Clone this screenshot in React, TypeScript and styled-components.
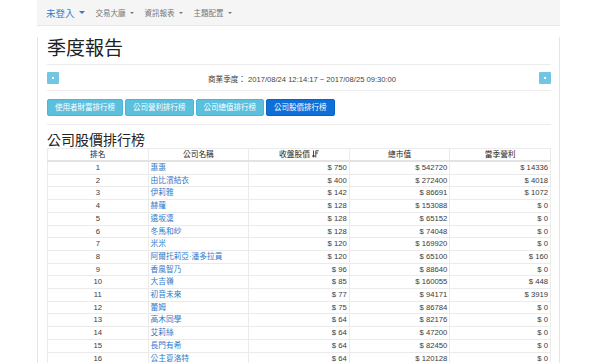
import styled, { createGlobalStyle } from 'styled-components'

const GlobalStyle = createGlobalStyle`
    html, body {
        margin: 0;
        padding: 0;
        overflow: hidden;
        background: #fff;
    }
    body {
        font-family: "Liberation Sans", "Noto Sans CJK TC", sans-serif;
        color: #333;
    }
`

const Page = styled.div`
    width: 523px;
    margin-left: 37px;
`

const Navbar = styled.nav`
    height: 25px;
    background: #f5f5f5;
    border-bottom: 1px solid #e7e7e7;
    display: flex;
    align-items: center;
    padding-left: 9px;
    gap: 11px;
`

const NavItem = styled.span<{ $main?: boolean }>`
    display: flex;
    align-items: center;
    gap: 4px;
    font-size: ${p => (p.$main ? '9.5px' : '7.5px')};
    color: ${p => (p.$main ? '#2f7bd0' : '#777')};
`

const Caret = styled.span<{ $main?: boolean }>`
    width: 0;
    height: 0;
    border-left: ${p => (p.$main ? '3px' : '2px')} solid transparent;
    border-right: ${p => (p.$main ? '3px' : '2px')} solid transparent;
    border-top: ${p => (p.$main ? '3px' : '2px')} solid currentColor;
`

const Panel = styled.main`
    border-left: 1px solid #e5e5e5;
    border-right: 1px solid #e5e5e5;
    padding: 0 8px 40px 9px;
`

const Title = styled.h1`
    margin: 11px 0 0;
    font-size: 19px;
    line-height: 19px;
    font-weight: 400;
    font-family: "Noto Sans CJK TC", sans-serif;
    color: #222;
`

const Rule = styled.hr<{ $top: number }>`
    margin: ${p => p.$top}px 0 0;
    border: 0;
    border-top: 1px solid #ececec;
`

const PeriodRow = styled.div`
    margin-top: 7px;
    height: 12px;
    display: flex;
    align-items: center;
    justify-content: space-between;
`

const PageButton = styled.span`
    width: 12px;
    height: 12px;
    border-radius: 1px;
    background: #72c6e4;
    display: flex;
    align-items: center;
    justify-content: center;

    &::after {
        content: '';
        width: 2px;
        height: 2px;
        background: #fff;
    }
`

const Period = styled.span`
    font-size: 7.6px;
    color: #444;
    padding-left: 6px;
`

const Tabs = styled.div`
    margin-top: 8px;
    display: flex;
    gap: 2px;
`

const TabButton = styled.button<{ $active?: boolean }>`
    height: 17px;
    padding: 0 7px;
    border-radius: 2px;
    border: 1px solid ${p => (p.$active ? '#0b62c0' : '#4ab5d8')};
    background: ${p => (p.$active ? '#0e6fd8' : '#5bc0de')};
    color: #fff;
    font-family: "Liberation Sans", "Noto Sans CJK TC", sans-serif;
    font-size: 7.5px;
    line-height: 15px;
`

const Heading = styled.h3`
    margin: 7px 0 2px;
    font-size: 14px;
    line-height: 14px;
    font-weight: 400;
    font-family: "Noto Sans CJK TC", sans-serif;
    color: #222;
`

const Table = styled.table`
    width: 504px;
    border-collapse: collapse;
    table-layout: fixed;
    font-size: 7.7px;
`

const Th = styled.th`
    border: 1px solid #ebebeb;
    border-bottom: 2px solid #e3e3e3;
    line-height: 11px;
    padding: 0 2px;
    font-weight: 400;
    color: #222;
    text-align: center;
`

const Td = styled.td<{ $align: 'left' | 'center' | 'right' }>`
    border: 1px solid #ebebeb;
    line-height: 11.7px;
    padding: 0 2px;
    text-align: ${p => p.$align};
    color: #3a3a3a;
    white-space: nowrap;
`

const NameLink = styled.a`
    color: #2d78c8;
    text-decoration: none;
`

const SortIcon = () => (
    <svg width="7" height="8" viewBox="0 0 7 8" style={{ verticalAlign: '-1px', marginLeft: 2 }}>
        <path d="M1.5 0.5V7M0 5.2L1.5 7.3L3 5.2" stroke="#333" strokeWidth="0.9" fill="none" />
        <path d="M3.8 0.8H6.8M3.8 3H6M3.8 0.8V7.5" stroke="#333" strokeWidth="0.9" fill="none" />
    </svg>
)

const rows: [string, number, number, number][] = [
    ['惠惠', 750, 542720, 14336],
    ['由比濱結衣', 400, 272400, 4018],
    ['伊莉雅', 142, 86691, 1072],
    ['赫蘿', 128, 153088, 0],
    ['遠坂凜', 128, 65152, 0],
    ['冬馬和紗', 128, 74048, 0],
    ['米米', 120, 169920, 0],
    ['阿爾托莉亞·潘多拉貢', 120, 65100, 160],
    ['香風智乃', 96, 88640, 0],
    ['大吉嶺', 85, 160055, 448],
    ['初音未來', 77, 94171, 3919],
    ['蕾姆', 75, 86784, 0],
    ['高木同學', 64, 82176, 0],
    ['艾莉絲', 64, 47200, 0],
    ['長門有希', 64, 82450, 0],
    ['公主夏洛特', 64, 120128, 0],
]

const App = () => {
    return (
        <Page>
            <GlobalStyle />
            <Navbar>
                <NavItem $main>未登入 <Caret $main /></NavItem>
                <NavItem>交易大廳 <Caret /></NavItem>
                <NavItem>資訊報表 <Caret /></NavItem>
                <NavItem>主題配置 <Caret /></NavItem>
            </Navbar>
            <Panel>
                <Title>季度報告</Title>
                <Rule $top={8} />
                <PeriodRow>
                    <PageButton />
                    <Period>商業季度： 2017/08/24 12:14:17 ~ 2017/08/25 09:30:00</Period>
                    <PageButton />
                </PeriodRow>
                <Rule $top={6} />
                <Tabs>
                    <TabButton>使用者財富排行榜</TabButton>
                    <TabButton>公司營利排行榜</TabButton>
                    <TabButton>公司總值排行榜</TabButton>
                    <TabButton $active>公司股價排行榜</TabButton>
                </Tabs>
                <Rule $top={8} />
                <Heading>公司股價排行榜</Heading>
                <Table>
                    <thead>
                        <tr>
                            <Th>排名</Th>
                            <Th>公司名稱</Th>
                            <Th>收盤股價<SortIcon /></Th>
                            <Th>總市值</Th>
                            <Th>當季營利</Th>
                        </tr>
                    </thead>
                    <tbody>
                        {rows.map(([name, price, cap, profit], i) => (
                            <tr key={name}>
                                <Td $align="center">{i + 1}</Td>
                                <Td $align="left"><NameLink href="#">{name}</NameLink></Td>
                                <Td $align="right">$ {price}</Td>
                                <Td $align="right">$ {cap}</Td>
                                <Td $align="right">$ {profit}</Td>
                            </tr>
                        ))}
                    </tbody>
                </Table>
            </Panel>
        </Page>
    )
}

export default App
